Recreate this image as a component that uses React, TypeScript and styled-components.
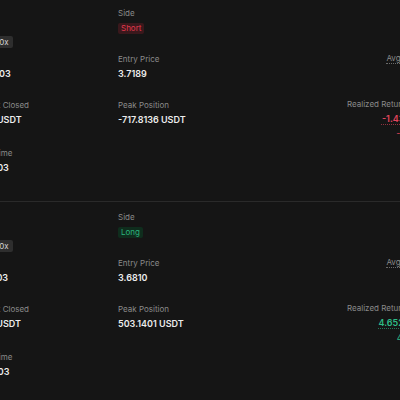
import React from "react";
import styled, { createGlobalStyle } from "styled-components";

type Tone = "default" | "loss" | "profit";
type Side = "Short" | "Long";

interface IPosition {
    symbol: string;
    leverage: string;
    side: Side;
    qty: string;
    entryPrice: string;
    amountClosed: string;
    peakPosition: string;
    openTime: string;
    status: string;
    avgClose: string;
    realized: string;
    realizedPct: string;
}

const GlobalStyle = createGlobalStyle`
    html, body {
        margin: 0;
        padding: 0;
        background: #151515;
    }
    body {
        font-family: Inter, "Noto Sans", sans-serif;
        overflow: hidden;
    }
`;

const Viewport = styled.div`
    width: 400px;
    height: 400px;
    overflow: hidden;
    background: #151515;
`;

// the screenshot is a crop of a wider list, so the list hangs past both edges
const Page = styled.div`
    width: 475px;
    margin: -2px 0 0 -29px;
`;

const Section = styled.div`
    box-sizing: border-box;
    height: 203px;
    padding-top: 9px;
    display: grid;
    grid-template-columns: 147px 1fr auto;
    & + & {
        border-top: 1px solid #2a2a2a;
    }
`;

const Column = styled.div<{ $end?: boolean; $gap?: number }>`
    display: flex;
    flex-direction: column;
    align-items: ${(p) => (p.$end ? "flex-end" : "flex-start")};
    text-align: ${(p) => (p.$end ? "right" : "left")};
    gap: ${(p) => p.$gap ?? 0}px;
`;

const Field = styled.div<{ $mt?: number }>`
    display: flex;
    flex-direction: column;
    align-items: inherit;
    margin-top: ${(p) => p.$mt ?? 0}px;
`;

const Label = styled.div`
    display: flex;
    align-items: center;
    gap: 2px;
    font-size: 8px;
    line-height: 12px;
    color: #8a8a8a;
    white-space: nowrap;
`;

const Term = styled.span`
    border-bottom: 1px dotted #6a6a6a;
    line-height: 10px;
`;

const toneColor = (t: Tone = "default") =>
    t === "loss" ? "#e2445c" : t === "profit" ? "#2dbb86" : "#ececec";

const Value = styled.div<{ $tone?: Tone; $dotted?: boolean }>`
    margin-top: 3px;
    font-size: 9px;
    font-weight: 600;
    line-height: 12px;
    white-space: nowrap;
    color: ${(p) => toneColor(p.$tone)};
    ${(p) =>
        p.$dotted &&
        `text-decoration: underline dotted; text-underline-offset: 2px; text-decoration-color: ${toneColor(p.$tone)}99;`}
`;

const SubValue = styled.div<{ $tone?: Tone }>`
    margin-top: 3px;
    font-size: 9px;
    line-height: 12px;
    white-space: nowrap;
    color: ${(p) => toneColor(p.$tone)};
`;

const SideBadge = styled.span<{ $side: Side }>`
    display: block;
    margin-top: 4px;
    padding: 0 3px;
    border-radius: 2px;
    font-size: 8px;
    line-height: 11px;
    background: ${(p) => (p.$side === "Short" ? "#3a181c" : "#0f2d1d")};
    color: ${(p) => (p.$side === "Short" ? "#e3384d" : "#2bb57e")};
`;

const SymbolRow = styled.div<{ $mt?: number }>`
    display: flex;
    align-items: center;
    gap: 6px;
    height: 12px;
    margin-top: ${(p) => p.$mt ?? 0}px;
`;

const SymbolName = styled.span`
    font-size: 9px;
    font-weight: 600;
    color: #ececec;
`;

const Leverage = styled.span`
    padding: 0 4px;
    border-radius: 2px;
    font-size: 8px;
    line-height: 12px;
    background: #2e2e2e;
    color: #d2d2d2;
`;

const InfoIcon = () => (
    <svg width="8" height="8" viewBox="0 0 16 16" fill="none" stroke="#8a8a8a" strokeWidth="1.5">
        <circle cx="8" cy="8" r="6.5" />
        <path d="M8 7v4.5M8 4.6v.2" strokeLinecap="round" />
    </svg>
);

const POSITIONS: IPosition[] = [
    {
        symbol: "SUI",
        leverage: "10x",
        side: "Short",
        qty: "4,893.03",
        entryPrice: "3.7189",
        amountClosed: "18.60 USDT",
        peakPosition: "-717.8136 USDT",
        openTime: "16:47:03",
        status: "Closed",
        avgClose: "3.7210",
        realized: "-1.43721 USDT",
        realizedPct: "-0.29% ROI",
    },
    {
        symbol: "SUI",
        leverage: "10x",
        side: "Long",
        qty: "4,136.03",
        entryPrice: "3.6810",
        amountClosed: "13.70 USDT",
        peakPosition: "503.1401 USDT",
        openTime: "09:12:03",
        status: "Closed",
        avgClose: "3.7150",
        realized: "4.652318 USDT",
        realizedPct: "4.912% ROI",
    },
];

const PositionCard: React.FC<{ pos: IPosition }> = ({ pos }) => {
    const tone: Tone = pos.realized.startsWith("-") ? "loss" : "profit";
    return (
        <Section>
            <Column>
                <SymbolRow $mt={29}>
                    <SymbolName>{pos.symbol}</SymbolName>
                    <Leverage>{pos.leverage}</Leverage>
                </SymbolRow>
                <Field $mt={5}>
                    <Label>Qty</Label>
                    <Value>{pos.qty}</Value>
                </Field>
                <Field $mt={19}>
                    <Label>Amount Closed</Label>
                    <Value>{pos.amountClosed}</Value>
                </Field>
                <Field $mt={21}>
                    <Label>Open Time</Label>
                    <Value>{pos.openTime}</Value>
                </Field>
            </Column>
            <Column $gap={19}>
                <Field>
                    <Label>Side</Label>
                    <SideBadge $side={pos.side}>{pos.side}</SideBadge>
                </Field>
                <Field>
                    <Label>Entry Price</Label>
                    <Value>{pos.entryPrice}</Value>
                </Field>
                <Field>
                    <Label>Peak Position</Label>
                    <Value>{pos.peakPosition}</Value>
                </Field>
            </Column>
            <Column $end $gap={19}>
                <Field>
                    <Label>Status</Label>
                    <Value>{pos.status}</Value>
                </Field>
                <Field>
                    <Label>
                        <Term>Avg Close Price</Term>
                    </Label>
                    <Value>{pos.avgClose}</Value>
                </Field>
                <Field>
                    <Label>
                        Realized Return (USDT)
                        <InfoIcon />
                    </Label>
                    <Value $tone={tone} $dotted>
                        {pos.realized}
                    </Value>
                    <SubValue $tone={tone}>{pos.realizedPct}</SubValue>
                </Field>
            </Column>
        </Section>
    );
};

export default function App() {
    return (
        <Viewport>
            <GlobalStyle />
            <Page>
                {POSITIONS.map((p, i) => (
                    <PositionCard key={i} pos={p} />
                ))}
            </Page>
        </Viewport>
    );
}
